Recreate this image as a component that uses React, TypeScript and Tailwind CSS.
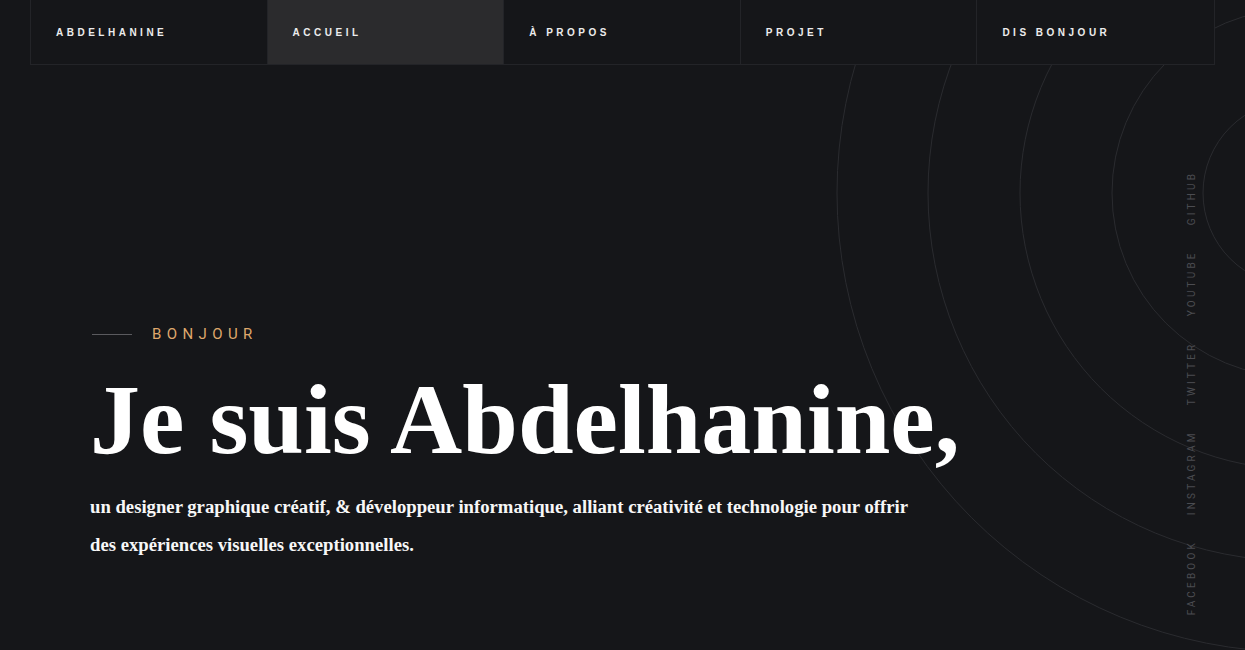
import React from 'react'

const NAV = ['Abdelhanine', 'Accueil', 'À propos', 'Projet', 'Dis bonjour']
const SOCIALS = ['Facebook', 'Instagram', 'Twitter', 'Youtube', 'Github']
const RINGS = [93, 184, 276, 368, 459]

/* ─── Concentric ring decoration ─── */
function Rings() {
  return (
    <svg
      className="absolute top-0 right-0 pointer-events-none"
      width={500}
      height={650}
      viewBox="745 0 500 650"
      fill="none"
    >
      {RINGS.map((r) => (
        <circle key={r} cx={1296} cy={193} r={r} stroke="#2a2b2f" strokeWidth={1} />
      ))}
    </svg>
  )
}

export default function App() {
  return (
    <section className="relative h-[650px] overflow-hidden bg-[#151619] font-['Liberation_Sans',Arial,sans-serif]">
      <Rings />

      {/* Top nav */}
      <nav className="relative mx-[30px] grid h-[65px] grid-cols-5 border-x border-b border-[#232428] bg-[#151619]">
        {NAV.map((item, i) => (
          <a
            key={item}
            href="#"
            className={
              'flex items-center border-[#232428] pl-[25px] text-[10px] font-bold uppercase tracking-[0.35em] text-[#ececec] ' +
              (i < NAV.length - 1 ? 'border-r ' : '') +
              (i === 1 ? 'bg-[#2b2b2d]' : 'bg-[#151619]')
            }
          >
            {item}
          </a>
        ))}
      </nav>

      {/* Hero */}
      <div className="relative pl-[90px] pt-[259px]">
        <div className="flex items-center gap-5 pl-[2px]">
          <span className="h-px w-10 bg-[#5a5a5e]" />
          <span className="text-[15px] leading-5 uppercase tracking-[0.36em] text-[#dfa86c] font-['Roboto','Liberation_Sans',sans-serif]">
            Bonjour
          </span>
        </div>

        <h1 className="mt-[26px] text-[100px] leading-none font-bold text-white font-['Liberation_Serif','Times_New_Roman',serif]">
          Je suis Abdelhanine,
        </h1>

        <p className="mt-[18px] max-w-[845px] text-[18.7px] leading-[38px] font-bold text-[#f7f7f7] font-['Liberation_Serif','Times_New_Roman',serif]">
          un designer graphique créatif, &amp; développeur informatique, alliant créativité et technologie pour offrir
          des expériences visuelles exceptionnelles.
        </p>
      </div>

      {/* Social links, vertical */}
      <div className="absolute bottom-[35px] right-[45px] flex w-4 rotate-180 gap-[25px] [writing-mode:vertical-rl]">
        {SOCIALS.map((s) => (
          <a
            key={s}
            href="#"
            className="text-[10px] leading-4 uppercase tracking-[0.32em] text-[#4b4c51] font-['Roboto','Liberation_Sans',sans-serif]"
          >
            {s}
          </a>
        ))}
      </div>
    </section>
  )
}
